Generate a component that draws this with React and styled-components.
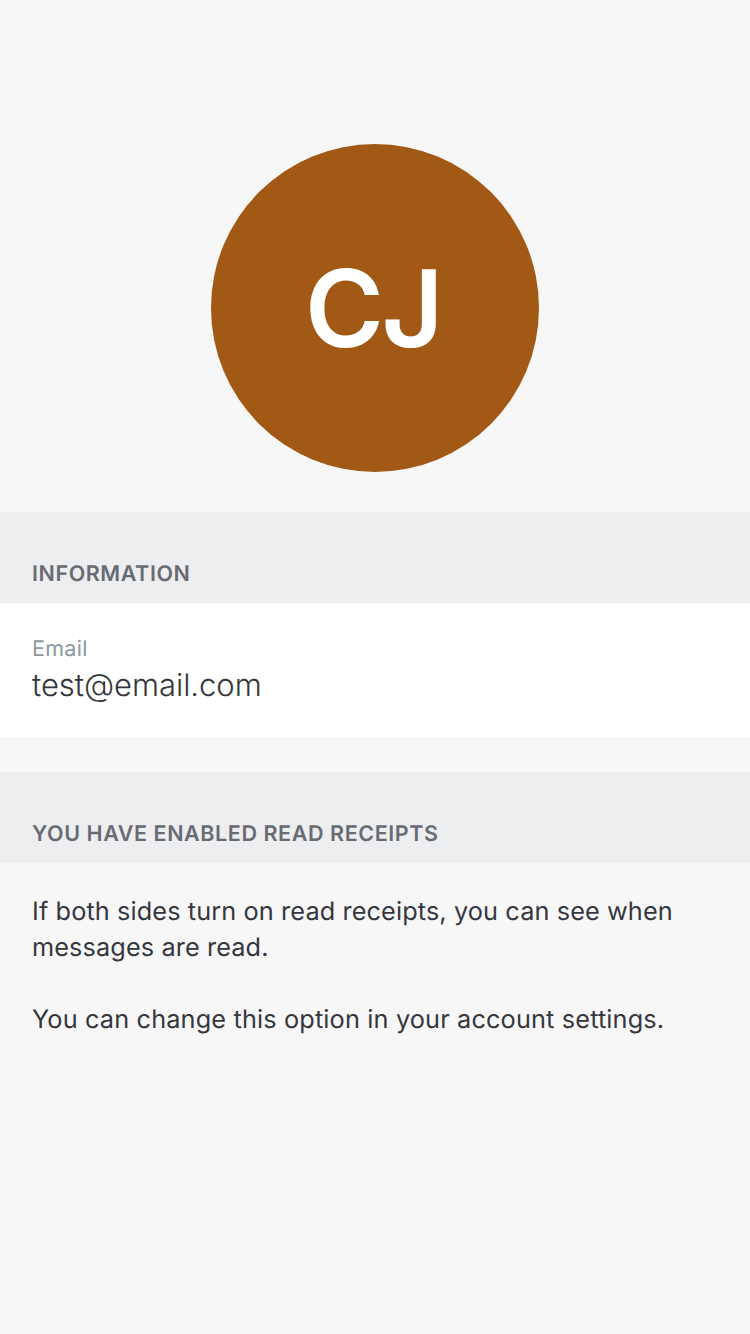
import React from "react";
import styled, { createGlobalStyle } from "styled-components";

const GlobalStyle = createGlobalStyle`
  body { margin: 0; background: #f7f7f7; }
  * { box-sizing: border-box; }
`;

const Screen = styled.main`
  min-height: 1334px;
  background: #f7f7f7;
  color: #33373a;
  font-family: Inter, "Liberation Sans", sans-serif;
  text-rendering: geometricPrecision;
`;

const Profile = styled.header`
  display: flex;
  justify-content: center;
  padding: 144px 0 40px;
`;

const Avatar = styled.div`
  display: flex;
  align-items: center;
  justify-content: center;
  width: 328px;
  height: 328px;
  padding-right: 4px;
  border-radius: 50%;
  background: #a25915;
  color: #fff;
  font-size: 107px;
  font-weight: 600;
  line-height: 1;
`;

const Initials = styled.span`
  white-space: nowrap;
  letter-spacing: -2.5px;
`;

const SectionTitle = styled.h2`
  height: 91px;
  margin: 0;
  padding: 49px 32px 0;
  background: #edeef0;
  color: #696b73;
  font-size: 21.5px;
  font-weight: 600;
  line-height: 26px;
  letter-spacing: 0.58px;
  white-space: nowrap;
`;

const Field = styled.div`
  height: 134px;
  margin-bottom: 35px;
  padding: 33px 32px 0;
  background: #fff;
`;

const Label = styled.div`
  color: #8d999f;
  font-size: 21.5px;
  line-height: 26px;
  letter-spacing: 0.3px;
`;

const Value = styled.div`
  margin-top: 4px;
  font-size: 31px;
  font-weight: 300;
  line-height: 40px;
  letter-spacing: -0.05px;
  white-space: nowrap;
`;

const Notice = styled.div`
  padding: 31px 32px;
`;

const Paragraph = styled.p`
  margin: 0 0 36px;
  color: #35373f;
  font-size: 25.3px;
  line-height: 36px;
  letter-spacing: ${(p) => p.$tracking}px;
`;

const Line = styled.span`
  display: block;
  white-space: nowrap;
`;

export default function App() {
  return (
    <>
      <GlobalStyle />
      <Screen>
        <Profile>
          <Avatar><Initials>CJ</Initials></Avatar>
        </Profile>
        <section>
          <SectionTitle>INFORMATION</SectionTitle>
          <Field>
            <Label>Email</Label>
            <Value>test@email.com</Value>
          </Field>
        </section>
        <section>
          <SectionTitle>YOU HAVE ENABLED READ RECEIPTS</SectionTitle>
          <Notice>
            <Paragraph $tracking={0.1}>
              <Line>If both sides turn on read receipts, you can see when</Line>
              <Line>messages are read.</Line>
            </Paragraph>
            <Paragraph $tracking={0.14}>
              <Line>You can change this option in your account settings.</Line>
            </Paragraph>
          </Notice>
        </section>
      </Screen>
    </>
  );
}
